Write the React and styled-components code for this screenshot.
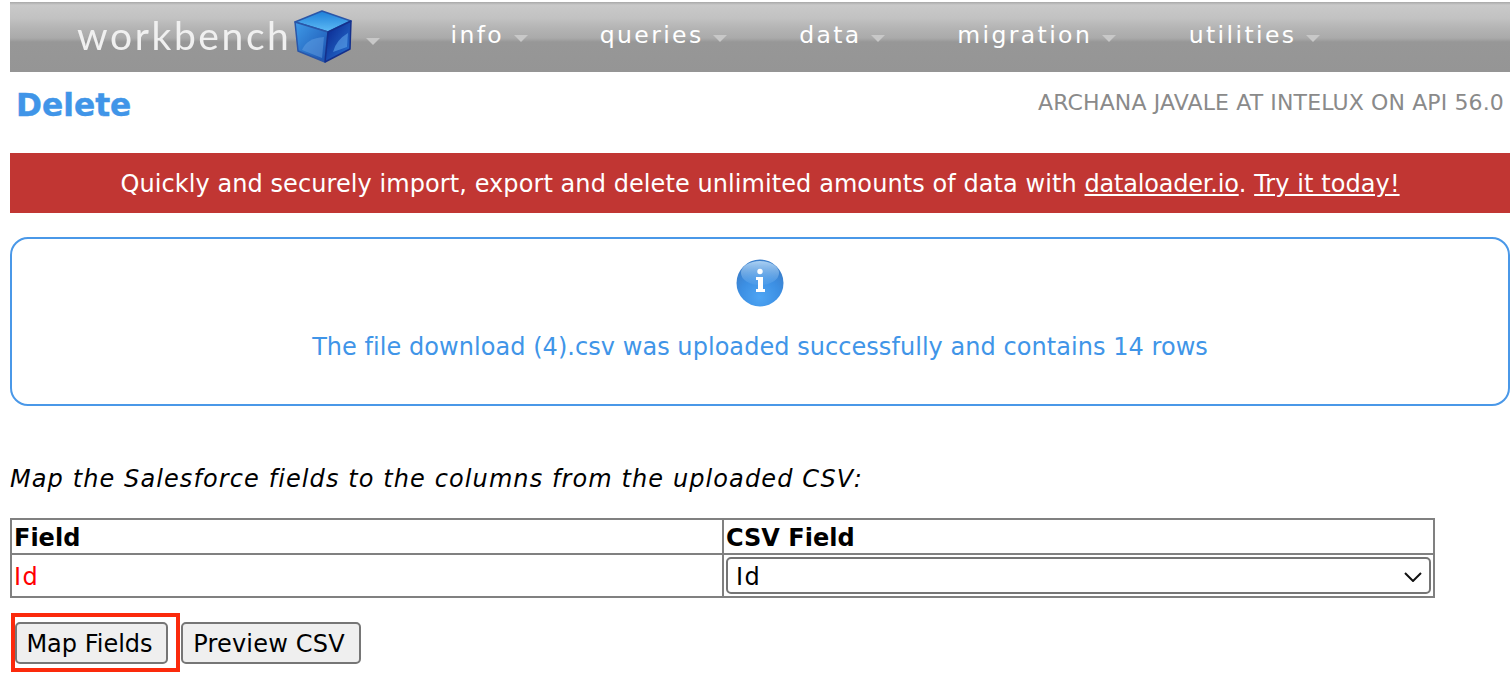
import React from "react";
import styled, { createGlobalStyle } from "styled-components";

const Global = createGlobalStyle`
  html, body { margin: 0; padding: 0; background: #fff; overflow: hidden; }
  body { font-family: "DejaVu Sans", Verdana, sans-serif; }
`;

const Page = styled.div`
  width: 1510px;
  height: 678px;
  padding: 2px 0 0 10px;
  box-sizing: border-box;
  overflow: hidden;
`;

const NavBar = styled.nav`
  height: 70px;
  display: flex;
  align-items: flex-start;
  background: linear-gradient(
    to bottom,
    #a8a8a8 0,
    #c9c9c9 3px,
    #c2c2c2 16px,
    #b4b4b4 26px,
    #aaaaaa 36px,
    #979797 40px,
    #959595 100%
  );
`;

const Logo = styled.div`
  display: flex;
  align-items: center;
  margin: 6px 0 0 67px;
  height: 56px;
`;

const LogoWord = styled.span`
  font-family: "Lato", sans-serif;
  font-size: 39px;
  font-weight: 400;
  letter-spacing: 2.6px;
  color: #f0f0f0;
  margin-top: -2px;
  filter: blur(0.4px);
`;

const Caret = styled.span`
  display: inline-block;
  width: 0;
  height: 0;
  border-left: 7px solid transparent;
  border-right: 7px solid transparent;
  border-top: 7px solid #c8c8c8;
`;

const LogoCaret = styled(Caret)`
  margin: 10px 0 0 12px;
`;

const NavItem = styled.div`
  display: flex;
  align-items: center;
  gap: 9.5px;
  margin-top: 19px;
  margin-left: ${(p) => p.$gap}px;
  color: #fff;
  font-size: 23.5px;
  letter-spacing: 2.4px;
  line-height: 28px;
  ${Caret} { margin-top: 6px; }
`;

const TitleRow = styled.div`
  height: 81px;
  display: flex;
  justify-content: space-between;
  align-items: flex-start;
`;

const Title = styled.h1`
  margin: 13px 0 0 6px;
  font-size: 31.3px;
  line-height: 40px;
  font-weight: 700;
  color: #4095e8;
  -webkit-text-stroke: 0.4px #4095e8;
`;

const UserInfo = styled.div`
  margin: 18px 6px 0 0;
  font-size: 22px;
  letter-spacing: 0.13px;
  line-height: 26px;
  color: #8a8a8a;
`;

const Banner = styled.div`
  height: 60px;
  box-sizing: border-box;
  padding-top: 2px;
  display: flex;
  align-items: center;
  justify-content: center;
  background: #c13633;
  color: #fff;
  font-size: 24px;
  letter-spacing: 0.08px;
  white-space: pre;
  a { color: #fff; text-decoration: underline; }
`;

const DataLink = styled.a`
  letter-spacing: -0.2px;
`;

const InfoBox = styled.div`
  margin-top: 24px;
  height: 169px;
  box-sizing: border-box;
  border: 2px solid #4a98e8;
  border-radius: 18px;
  display: flex;
  flex-direction: column;
  align-items: center;
  padding-top: 20px;
  color: #4095e8;
  font-size: 24px;
`;

const InfoText = styled.div`
  margin-top: 23px;
  line-height: 34px;
  letter-spacing: 0.05px;
`;

const Prompt = styled.div`
  margin-top: 57px;
  font-size: 24px;
  letter-spacing: 1.1px;
  font-style: italic;
  line-height: 32px;
  color: #000;
`;

const MapTable = styled.table`
  margin-top: 23px;
  width: 1425px;
  height: 80px;
  border-collapse: collapse;
  table-layout: fixed;
  font-size: 24px;
  th, td {
    border: 2px solid #808080;
    padding: 2px 2px 0;
    text-align: left;
    color: #000;
  }
  th { height: 31px; }
  col:first-child { width: 712px; }
`;

const RequiredCell = styled.td`
  && { color: #f00; letter-spacing: 1.5px; padding-top: 3px; }
`;

const SelectCell = styled.td`
  && { padding: 0 2px; }
`;

const SelectBox = styled.div`
  height: 37px;
  box-sizing: border-box;
  border: 2px solid #757575;
  border-radius: 5px;
  padding: 2px 7px 0 8px;
  display: flex;
  align-items: center;
  justify-content: space-between;
  font-size: 24px;
  letter-spacing: 1.5px;
`;

const ButtonRow = styled.div`
  margin-top: 15px;
  margin-left: 1px;
  display: flex;
  align-items: flex-start;
`;

const Highlight = styled.div`
  width: 169px;
  height: 59px;
  flex: none;
  box-sizing: border-box;
  border: 4px solid #fb2a0c;
  padding: 5px 0 0 0;
`;

const Btn = styled.button`
  height: 42px;
  box-sizing: border-box;
  background: #efefef;
  border: 2px solid #767676;
  border-radius: 5px;
  font-family: "DejaVu Sans", Verdana, sans-serif;
  font-size: 24px;
  color: #000;
  padding: 2px 0 0;
  white-space: nowrap;
`;

const MapBtn = styled(Btn)`
  display: block;
  width: 153px;
  padding-right: 4px;
`;

const PreviewBtn = styled(Btn)`
  width: 180px;
  margin: 9px 0 0 1px;
  letter-spacing: 0.2px;
  padding-right: 4px;
`;

const CubeLogo = () => (
  <svg width="60" height="56" viewBox="0 0 60 56" style={{ marginLeft: 3, filter: "blur(0.5px)" }}>
    <defs>
      <linearGradient id="cubeTop" x1="0" y1="0" x2="0" y2="1">
        <stop offset="0" stopColor="#1d7fd8" />
        <stop offset="1" stopColor="#5fbcf6" />
      </linearGradient>
      <linearGradient id="cubeLeft" x1="0" y1="0" x2="1" y2="1">
        <stop offset="0" stopColor="#3f9be8" />
        <stop offset="1" stopColor="#1a4fae" />
      </linearGradient>
      <linearGradient id="cubeRight" x1="0" y1="0" x2="1" y2="1">
        <stop offset="0" stopColor="#07208a" />
        <stop offset="1" stopColor="#2a78d6" />
      </linearGradient>
    </defs>
    <path d="M1 14 L28 3 L57 13 L34 24 Z" fill="url(#cubeTop)" stroke="#2a56a8" strokeWidth="1.5" strokeLinejoin="round" />
    <path d="M1 14 L34 24 L31 54 L4 43 Z" fill="url(#cubeLeft)" stroke="#2a56a8" strokeWidth="1.5" strokeLinejoin="round" />
    <path d="M34 24 L57 13 L56 41 L31 54 Z" fill="url(#cubeRight)" stroke="#14308c" strokeWidth="1.5" strokeLinejoin="round" />
    <path d="M8 42 Q13 30 30 29 L28 50 Z" fill="#6aa6e6" opacity="0.45" />
    <path d="M39 44 Q42 32 54 25 L53 39 Z" fill="#5ea4ea" opacity="0.6" />
  </svg>
);

const InfoIcon = () => (
  <svg width="48" height="48" viewBox="0 0 48 48" style={{ filter: "blur(0.5px)" }}>
    <defs>
      <radialGradient id="infoBall" cx="50%" cy="80%" r="70%">
        <stop offset="0" stopColor="#4ea5f4" />
        <stop offset="0.6" stopColor="#3c8fe3" />
        <stop offset="1" stopColor="#3b7fcb" />
      </radialGradient>
      <linearGradient id="infoGloss" x1="0" y1="0" x2="0" y2="1">
        <stop offset="0" stopColor="#b7d9f7" stopOpacity="0.9" />
        <stop offset="1" stopColor="#7fbaf2" stopOpacity="0.15" />
      </linearGradient>
    </defs>
    <circle cx="24" cy="24" r="23.5" fill="url(#infoBall)" />
    <ellipse cx="24" cy="14" rx="19" ry="12" fill="url(#infoGloss)" />
    <circle cx="24" cy="12.5" r="2.7" fill="#fff" />
    <path d="M20 18 H27 V30 H29 V33 H20 V30 H22 V21 H20 Z" fill="#fff" />
  </svg>
);

const ChevronIcon = () => (
  <svg width="18" height="10" viewBox="0 0 18 10">
    <path d="M1 1 L9 9 L17 1" fill="none" stroke="#111" strokeWidth="2" />
  </svg>
);

const navItems = [
  { label: "info", gap: 70 },
  { label: "queries", gap: 72 },
  { label: "data", gap: 72 },
  { label: "migration", gap: 72 },
  { label: "utilities", gap: 73 },
];

export default function App() {
  return (
    <Page>
      <Global />
      <NavBar>
        <Logo>
          <LogoWord>workbench</LogoWord>
          <CubeLogo />
          <LogoCaret />
        </Logo>
        {navItems.map((n) => (
          <NavItem key={n.label} $gap={n.gap}>
            {n.label}
            <Caret />
          </NavItem>
        ))}
      </NavBar>
      <TitleRow>
        <Title>Delete</Title>
        <UserInfo>ARCHANA JAVALE AT INTELUX ON API 56.0</UserInfo>
      </TitleRow>
      <Banner>
        Quickly and securely import, export and delete unlimited amounts of data with <DataLink href="#d">dataloader.io</DataLink>. <a href="#t">Try it today!</a>
      </Banner>
      <InfoBox>
        <InfoIcon />
        <InfoText>The file download (4).csv was uploaded successfully and contains 14 rows</InfoText>
      </InfoBox>
      <Prompt>Map the Salesforce fields to the columns from the uploaded CSV:</Prompt>
      <MapTable>
        <colgroup>
          <col />
          <col />
        </colgroup>
        <thead>
          <tr>
            <th>Field</th>
            <th>CSV Field</th>
          </tr>
        </thead>
        <tbody>
          <tr>
            <RequiredCell>Id</RequiredCell>
            <SelectCell>
              <SelectBox>
                Id
                <ChevronIcon />
              </SelectBox>
            </SelectCell>
          </tr>
        </tbody>
      </MapTable>
      <ButtonRow>
        <Highlight>
          <MapBtn>Map Fields</MapBtn>
        </Highlight>
        <PreviewBtn>Preview CSV</PreviewBtn>
      </ButtonRow>
    </Page>
  );
}
